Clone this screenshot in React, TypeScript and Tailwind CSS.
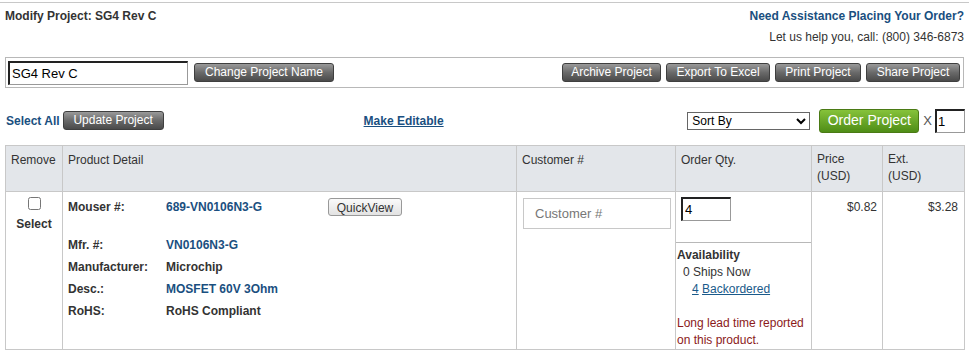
import React from "react";

const btn =
  "whitespace-nowrap rounded-[3px] border border-[#3f3f3f] bg-gradient-to-b from-[#9a9a9a] via-[#6a6a6a] to-[#4a4a4a] h-[19px] text-[12px] leading-[17px] text-white";

function DetailRow({ label, value, link, tall }: { label: string; value: string; link?: boolean; tall?: boolean }) {
  return (
    <div className={tall ? "flex h-[23px] items-center" : "flex h-[22px] items-center"}>
      <span className="w-[98px] font-bold text-[#333]">{label}</span>
      <span className={link ? "font-bold text-[#1a4f80]" : "font-bold text-[#333]"}>{value}</span>
    </div>
  );
}

export default function App() {
  return (
    <div className="h-[351px] w-[969px] overflow-hidden bg-white font-['Liberation_Sans',Arial,sans-serif] text-[12px] text-[#333]">
      <div className="mt-[2px] border-t border-[#c8c8c8]" />
      <div className="flex justify-between px-[5px] pt-[4px]">
        <div className="font-bold">Modify Project: SG4 Rev C</div>
        <div className="text-right">
          <div className="font-bold text-[#1a4f80]">Need Assistance Placing Your Order?</div>
          <div className="mt-[3px]">Let us help you, call: (800) 346-6873</div>
        </div>
      </div>

      <div className="mx-[5px] mt-[11px] flex h-[31px] items-center justify-between border border-[#b8b8b8] px-[2px]">
        <div className="flex items-center gap-[6px]">
          <input
            defaultValue="SG4 Rev C"
            className="h-[24px] w-[180px] border border-[#999] border-t-2 border-l-2 border-t-[#222] border-l-[#222] px-[2px] text-[13px] text-black outline-none"
          />
          <button className={btn + " w-[140px]"}>Change Project Name</button>
        </div>
        <div className="flex items-center gap-[5px] pr-[1px]">
          <button className={btn + " w-[99px]"}>Archive Project</button>
          <button className={btn + " w-[104px]"}>Export To Excel</button>
          <button className={btn + " w-[86px]"}>Print Project</button>
          <button className={btn + " w-[94px]"}>Share Project</button>
        </div>
      </div>

      <div className="mt-[20px] flex h-[25px] items-center pl-[6px] pr-[4px]">
        <span className="font-bold text-[#1a4f80]">Select All</span>
        <button className={btn + " ml-[3px] w-[101px]"}>Update Project</button>
        <span className="ml-[200px] font-bold text-[#1a4f80] underline">Make Editable</span>
        <div className="ml-auto flex items-center">
          <select className="h-[18px] w-[123px] border border-[#666] bg-white text-[12px] text-black">
            <option>Sort By</option>
          </select>
          <button className="ml-[9px] h-[24px] w-[100px] rounded-[3px] border border-[#4a7a14] bg-gradient-to-b from-[#86c33a] to-[#4f8d16] text-[14px] text-white">
            Order Project
          </button>
          <span className="ml-[4px] text-[13px] text-[#555]">X</span>
          <input
            defaultValue="1"
            className="ml-[3px] h-[24px] w-[30px] border border-[#999] border-t-2 border-l-2 border-t-[#222] border-l-[#222] px-[1px] text-[13px] text-black outline-none"
          />
        </div>
      </div>

      <table className="mx-[5px] mt-[12px] w-[960px] table-fixed border-collapse">
        <thead>
          <tr className="h-[46px] bg-[#e3e6ea] align-top text-left">
            <th className="w-[57px] border border-[#c8c8c8] px-[5px] pt-[5px] font-normal">Remove</th>
            <th className="w-[454px] border border-[#c8c8c8] px-[5px] pt-[5px] font-normal">Product Detail</th>
            <th className="w-[159px] border border-[#c8c8c8] px-[5px] pt-[5px] font-normal">Customer #</th>
            <th className="w-[136px] border border-[#c8c8c8] px-[5px] pt-[5px] font-normal">Order Qty.</th>
            <th className="w-[71px] border border-[#c8c8c8] px-[5px] pt-[5px] font-normal leading-[17px]">
              Price
              <br />
              (USD)
            </th>
            <th className="border border-[#c8c8c8] px-[5px] pt-[5px] font-normal leading-[17px]">
              Ext.
              <br />
              (USD)
            </th>
          </tr>
        </thead>
        <tbody>
          <tr className="h-[158px] align-top">
            <td className="border border-[#c8c8c8] pt-[5px] text-center">
              <input type="checkbox" className="h-[13px] w-[13px]" />
              <div className="font-bold">Select</div>
            </td>
            <td className="border border-[#c8c8c8] px-[5px] pt-[4px]">
              <div className="flex h-[22px] items-center">
                <span className="w-[98px] font-bold">Mouser #:</span>
                <span className="w-[162px] font-bold text-[#1a4f80]">689-VN0106N3-G</span>
                <button className="h-[18px] w-[74px] rounded-[3px] border border-[#999] bg-gradient-to-b from-[#fafafa] to-[#e2e2e2] text-[12px] text-[#333]">
                  QuickView
                </button>
              </div>
              <div className="h-[15px]" />
              <DetailRow label="Mfr. #:" value="VN0106N3-G" link tall />
              <DetailRow label="Manufacturer:" value="Microchip" />
              <DetailRow label="Desc.:" value="MOSFET 60V 3Ohm" link />
              <DetailRow label="RoHS:" value="RoHS Compliant" />
            </td>
            <td className="border border-[#c8c8c8] px-[6px] pt-[6px]">
              <input
                placeholder="Customer #"
                className="h-[31px] w-[148px] border border-[#c8c8c8] px-[11px] text-[13px] placeholder:text-[#777] outline-none"
              />
            </td>
            <td className="border border-[#c8c8c8] p-0">
              <div className="h-[51px] border-b border-[#b8b8b8] px-[5px] pt-[5px]">
                <input
                  defaultValue="4"
                  className="h-[24px] w-[50px] border border-[#999] border-t-2 border-l-2 border-t-[#222] border-l-[#222] px-[2px] text-[13px] text-black outline-none"
                />
              </div>
              <div className="pl-[1px] pt-[4px] leading-[17px]">
                <div className="font-bold">Availability</div>
                <div className="pl-[6px]">0 Ships Now</div>
                <div className="pl-[15px] text-[#1a5a8a]">
                  <span className="underline">4</span> <span className="underline">Backordered</span>
                </div>
                <div className="mt-[17px] text-[#8b1a1a]">
                  Long lead time reported
                  <br />
                  on this product.
                </div>
              </div>
            </td>
            <td className="border border-[#c8c8c8] px-[5px] pt-[6px] text-right">$0.82</td>
            <td className="border border-[#c8c8c8] px-[6px] pt-[6px] text-right">$3.28</td>
          </tr>
        </tbody>
      </table>
    </div>
  );
}
